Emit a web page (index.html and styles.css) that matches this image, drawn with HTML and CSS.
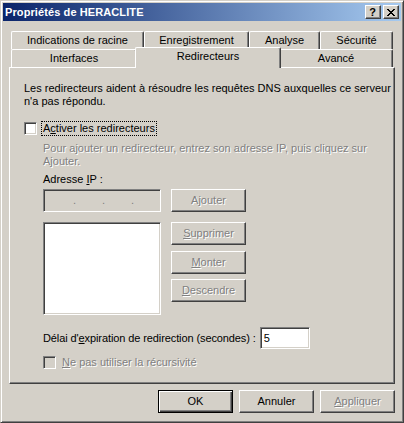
FILE: index.html
```html
<!DOCTYPE html>
<html lang="fr">
<head>
<meta charset="utf-8">
<title>Propriétés de HERACLITE</title>
<link rel="stylesheet" href="styles.css">
</head>
<body>
<div class="window">
  <div class="titlebar">
    <span class="title">Propriétés de HERACLITE</span>
    <div class="tb-buttons">
      <span class="tb-btn help">?</span>
      <span class="tb-btn close">
        <svg width="8" height="7" viewBox="0 0 8 7" shape-rendering="crispEdges"><path d="M0 0h2v1H0zM6 0h2v1H6zM1 1h2v1H1zM5 1h2v1H5zM2 2h4v1H2zM3 3h2v1H3zM2 4h4v1H2zM1 5h2v1H1zM5 5h2v1H5zM0 6h2v1H0zM6 6h2v1H6z" fill="#000"/></svg>
      </span>
    </div>
  </div>

  <div class="tabs">
    <div class="tabrow">
      <div class="tab w-ind">Indications de racine</div>
      <div class="tab w-enr">Enregistrement</div>
      <div class="tab w-ana">Analyse</div>
      <div class="tab w-sec">Sécurité</div>
    </div>
    <div class="tabrow">
      <div class="tab w-int">Interfaces</div>
      <div class="tab w-red selected">Redirecteurs</div>
      <div class="tab w-ava">Avancé</div>
    </div>
  </div>

  <div class="panel">
    <p class="desc">Les redirecteurs aident à résoudre les requêtes DNS auxquelles ce serveur<br>n'a pas répondu.</p>
    <div class="check-row">
      <span class="checkbox"></span>
      <span class="check-label focus">A<u>c</u>tiver les redirecteurs</span>
    </div>
    <div class="group">
      <p class="hint disabled">Pour ajouter un redirecteur, entrez son adresse IP, puis cliquez sur<br>Ajouter.</p>
      <div class="ip-label">Adresse <u>I</u>P :</div>
      <div class="ip-row">
        <div class="sunken ipfield"><span>.</span><span>.</span><span>.</span></div>
        <button class="btn disabled">A<u>j</u>outer</button>
      </div>
      <div class="list-row">
        <div class="sunken listbox"></div>
        <div class="list-btns">
          <button class="btn disabled"><u>S</u>upprimer</button>
          <button class="btn disabled b-mon"><u>M</u>onter</button>
          <button class="btn disabled b-des"><u>D</u>escendre</button>
        </div>
      </div>
      <div class="timeout-row">
        <span class="timeout-label">Délai d'<u>e</u>xpiration de redirection (secondes) :</span>
        <div class="sunken timeout-field">5</div>
      </div>
      <div class="check-row rec-row">
        <span class="checkbox off"></span>
        <span class="check-label disabled"><u>N</u>e pas utiliser la récursivité</span>
      </div>
    </div>
  </div>

  <div class="dlg-buttons">
    <button class="btn default">OK</button>
    <button class="btn">Annuler</button>
    <button class="btn disabled"><u>A</u>ppliquer</button>
  </div>
</div>
</body>
</html>
```

FILE: styles.css
```css
* { box-sizing: border-box; }
html, body { margin: 0; padding: 0; }
body {
  width: 404px;
  height: 423px;
  overflow: hidden;
  background: #d4d0c8;
  font-family: "Liberation Sans", Arial, sans-serif;
  font-size: 11px;
  color: #000;
}
p { margin: 0; }

.window {
  width: 404px;
  height: 423px;
  background: #d4d0c8;
  border: 1px solid;
  border-color: #d4d0c8 #404040 #404040 #d4d0c8;
  box-shadow: inset 1px 1px #fff, inset -1px -1px #808080;
  padding: 2px;
  display: flex;
  flex-direction: column;
}

/* title bar */
.titlebar {
  height: 18px;
  display: flex;
  align-items: center;
  justify-content: space-between;
  padding-left: 2px;
  background: linear-gradient(to right, #0a246a, #a6caf0);
}
.title {
  color: #fff;
  font-weight: bold;
  line-height: 18px;
  letter-spacing: 0.1px;
}
.tb-buttons {
  display: flex;
  gap: 2px;
  padding-right: 2px;
}
.tb-btn {
  width: 16px;
  height: 14px;
  display: flex;
  align-items: center;
  justify-content: center;
  background: #d4d0c8;
  border: 1px solid;
  border-color: #fff #404040 #404040 #fff;
  box-shadow: inset -1px -1px #808080;
}
.help {
  font-weight: bold;
  font-size: 11px;
  line-height: 12px;
  padding-right: 1px;
}
.close svg { display: block; margin-right: 1px; }

/* tabs */
.tabs {
  margin: 10px 6px 0;
  padding-left: 2px;
}
.tabrow {
  display: flex;
  height: 18px;
}
.tab {
  height: 18px;
  background: #d4d0c8;
  border-top: 1px solid #fff;
  border-left: 1px solid #fff;
  border-right: 1px solid #404040;
  box-shadow: inset -1px 0 #808080;
  border-radius: 2px 2px 0 0;
  text-align: center;
  line-height: 16px;
  white-space: nowrap;
}
.w-ind { width: 133px; }
.w-enr { width: 105px; }
.w-ana { width: 71px; }
.w-sec { width: 73px; }
.w-int { width: 126px; }
.w-red { width: 146px; }
.w-ava { width: 114px; }
.tab.selected {
  position: relative;
  z-index: 2;
  height: 21px;
  margin: -2px -2px -1px;
}

/* panel */
.panel {
  margin: 0 6px;
  height: 317px;
  border: 1px solid;
  border-color: #fff #404040 #404040 #fff;
  box-shadow: inset -1px -1px #808080;
  padding: 14px 0 0 14px;
}
.desc {
  line-height: 13px;
  white-space: nowrap;
}
.check-row {
  margin-top: 13px;
  height: 15px;
  display: flex;
  align-items: center;
}
.checkbox {
  width: 13px;
  height: 13px;
  background: #fff;
  border: 1px solid;
  border-color: #808080 #fff #fff #808080;
  box-shadow: inset 1px 1px #404040, inset -1px -1px #d4d0c8;
}
.checkbox.off { background: #d4d0c8; }
.check-label {
  margin-left: 4px;
  height: 15px;
  line-height: 13px;
  padding: 0 1px;
  border: 1px solid transparent;
  white-space: nowrap;
}
.check-label.focus { border: 1px dotted #000; }

.disabled {
  color: #808080;
  text-shadow: 1px 1px 0 #fff;
}

.group {
  margin-left: 19px;
}
.hint {
  margin-top: 6px;
  line-height: 13px;
  white-space: nowrap;
}
.ip-label {
  margin-top: 5px;
  line-height: 13px;
}
.ip-row {
  margin-top: 3px;
  display: flex;
  gap: 10px;
}
.sunken {
  border: 1px solid;
  border-color: #808080 #fff #fff #808080;
  box-shadow: inset 1px 1px #404040, inset -1px -1px #d4d0c8;
}
.ipfield {
  width: 118px;
  height: 23px;
  background: #d4d0c8;
  display: flex;
  justify-content: space-evenly;
  align-items: center;
  color: #808080;
  line-height: 13px;
  padding-left: 3px;
}

.btn {
  width: 75px;
  height: 23px;
  padding: 0;
  margin: 0;
  font: inherit;
  color: #000;
  background: #d4d0c8;
  border: 1px solid;
  border-color: #fff #404040 #404040 #fff;
  box-shadow: inset -1px -1px #808080;
  text-align: center;
  line-height: 19px;
}
.btn.disabled { color: #808080; }
.btn.default {
  border: 1px solid #000;
  box-shadow: inset 1px 1px #fff, inset -1px -1px #404040, inset -2px -2px #808080;
}

.list-row {
  margin-top: 10px;
  display: flex;
  gap: 10px;
}
.listbox {
  width: 118px;
  height: 93px;
  background: #fff;
}
.list-btns {
  display: flex;
  flex-direction: column;
}
.b-mon { margin-top: 6px; }
.b-des { margin-top: 5px; }

.timeout-row {
  margin-top: 12px;
  display: flex;
  align-items: center;
  gap: 4px;
}
.timeout-label {
  white-space: nowrap;
  letter-spacing: -0.1px;
}
.timeout-field {
  width: 50px;
  height: 22px;
  background: #fff;
  padding-left: 3px;
  line-height: 20px;
}
.rec-row { margin-top: 6px; }

.dlg-buttons {
  display: flex;
  justify-content: flex-end;
  gap: 6px;
  margin: 6px 6px 0;
}
```
